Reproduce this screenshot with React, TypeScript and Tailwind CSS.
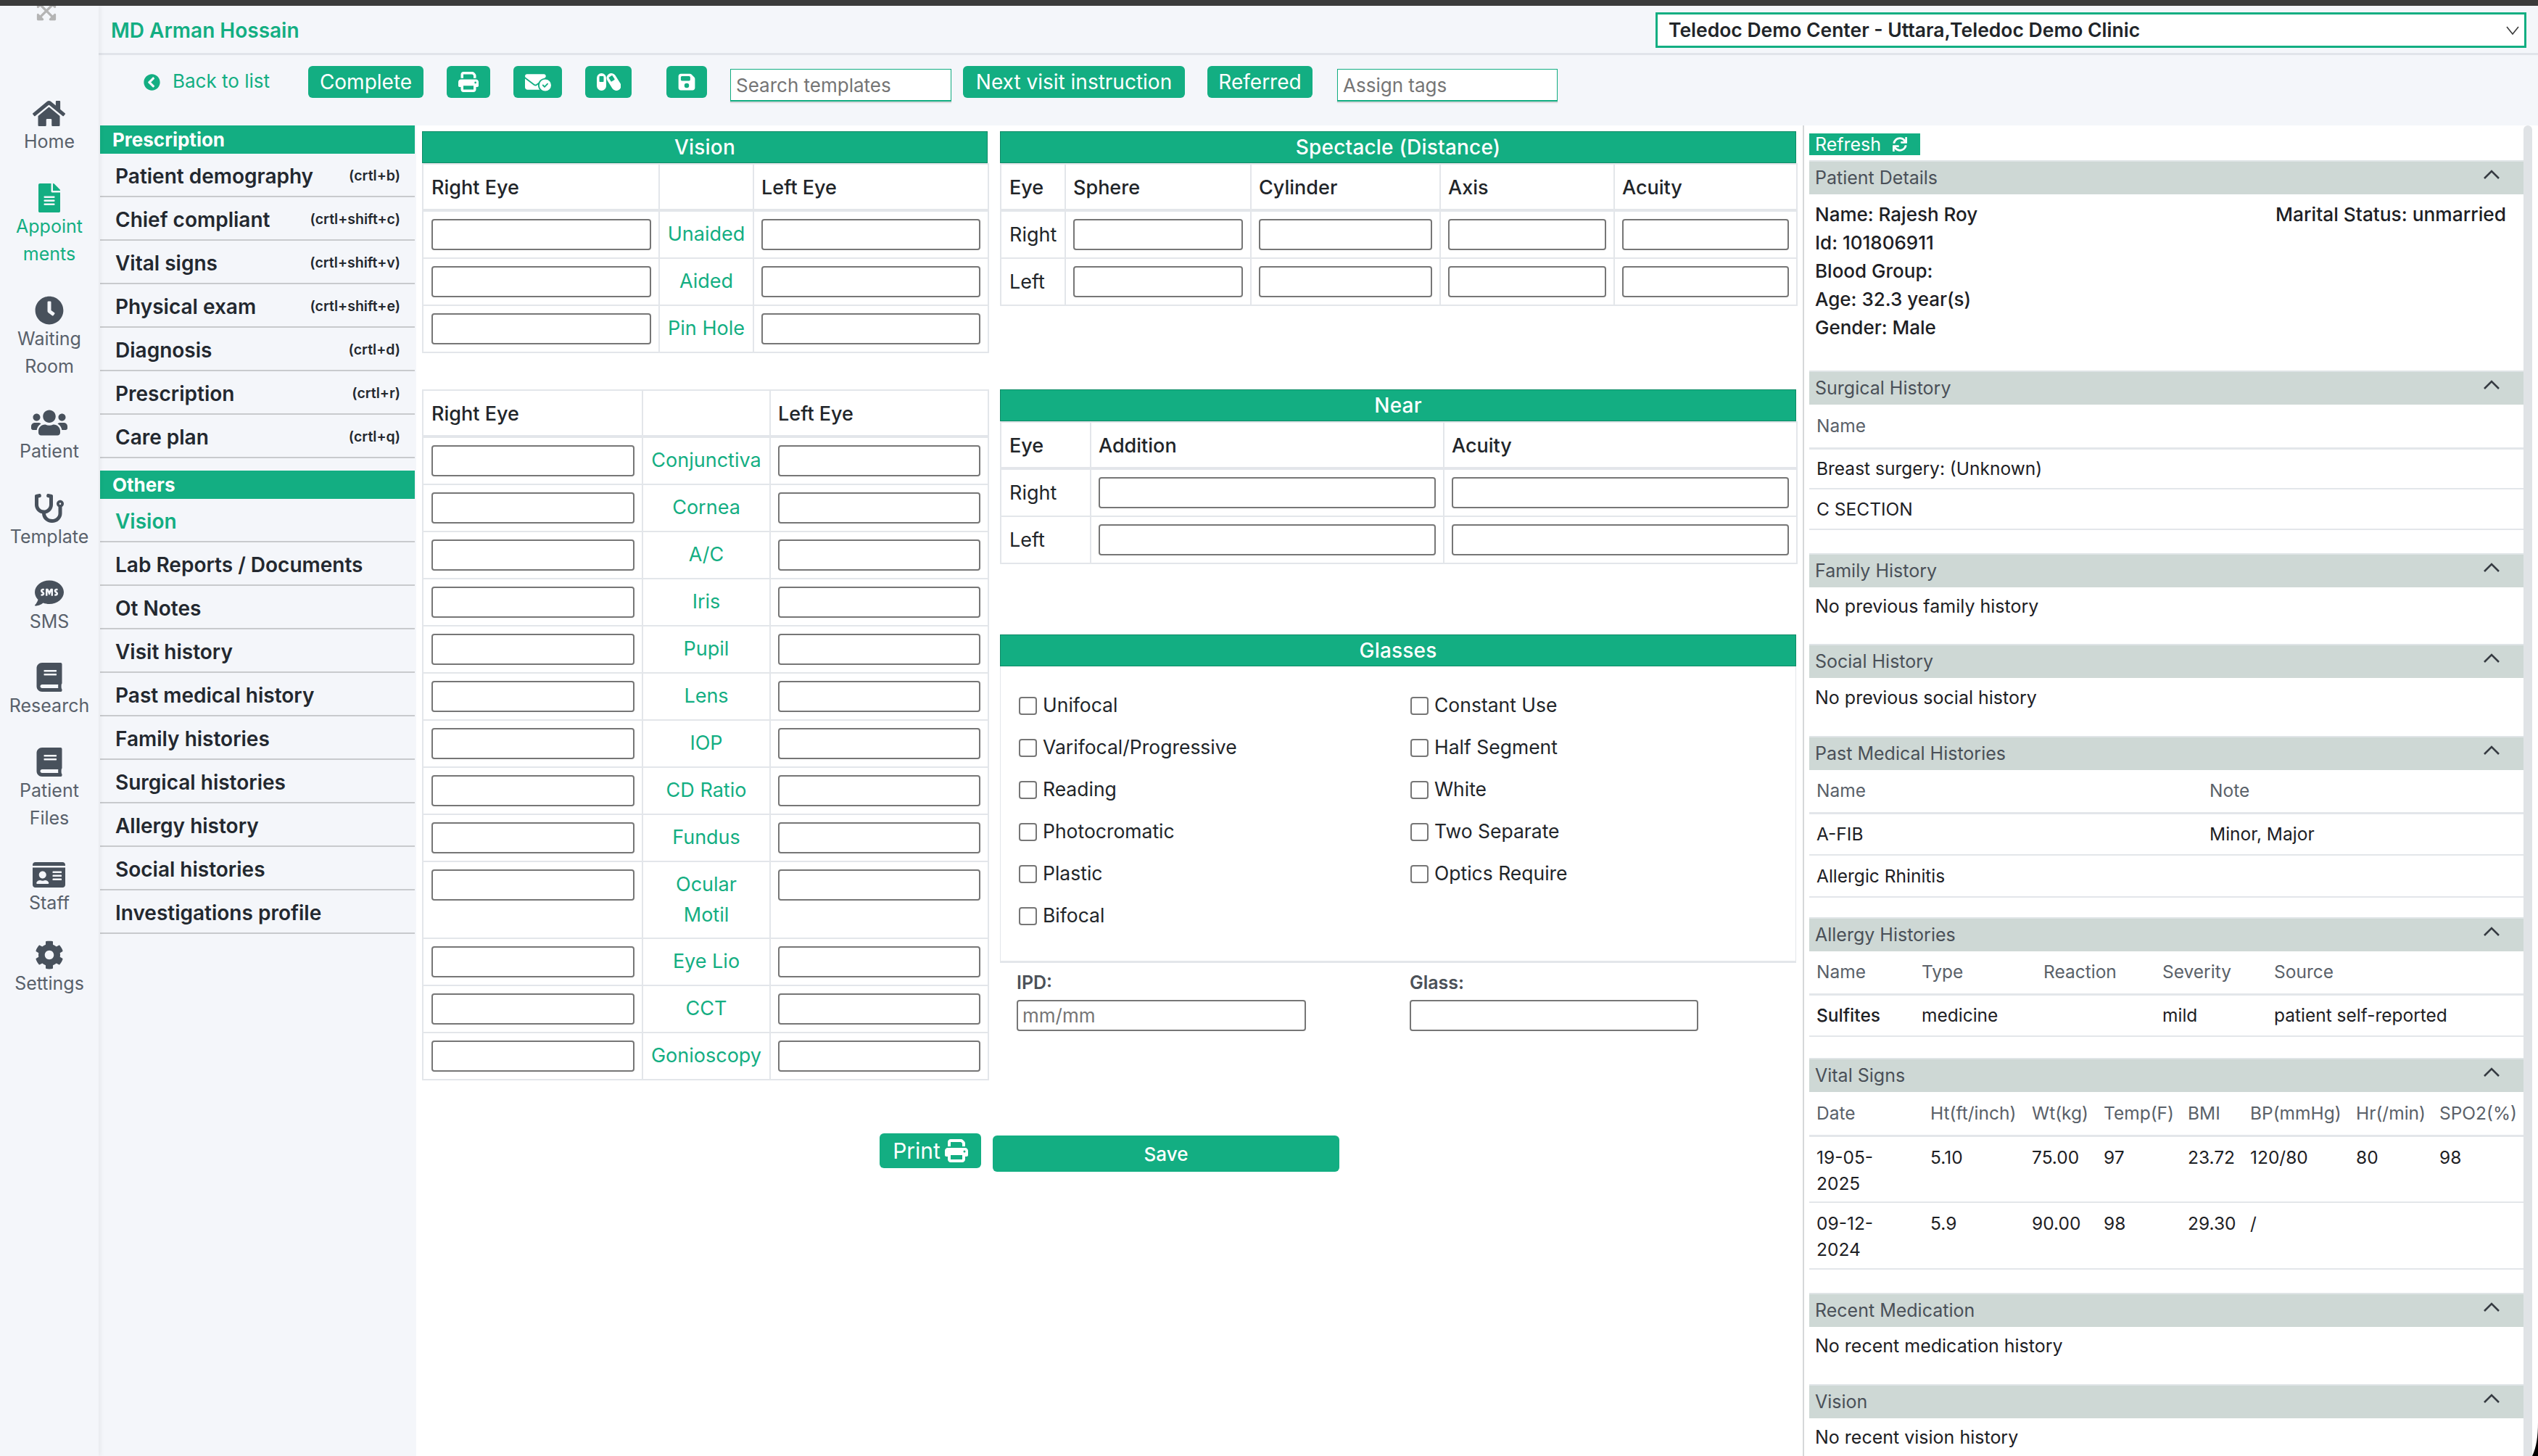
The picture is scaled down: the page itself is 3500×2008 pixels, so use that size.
import React from "react";
import { FaHome, FaFileAlt, FaClock, FaUsers, FaStethoscope, FaSms, FaBook, FaIdCard, FaCog, FaChevronCircleLeft, FaSync, FaExpandArrowsAlt } from "react-icons/fa";
import { FaEnvelopeCircleCheck, FaPrint, FaFloppyDisk } from "react-icons/fa6";

const side = [
  { icon: <FaHome size={45} />, label: ["Home"], m: "mt-[106px]" },
  { icon: <FaFileAlt size={40} />, label: ["Appoint", "ments"], m: "mt-[39px]", active: true },
  { icon: <FaClock size={40} />, label: ["Waiting", "Room"], m: "mt-[39px]" },
  { icon: <FaUsers size={50} />, label: ["Patient"], m: "mt-[39px]" },
  { icon: <FaStethoscope size={40} />, label: ["Template"], m: "mt-[40px]" },
  { icon: <FaSms size={40} />, label: ["SMS"], m: "mt-[39px]" },
  { icon: <FaBook size={40} />, label: ["Research"], m: "mt-[38px]" },
  { icon: <FaBook size={40} />, label: ["Patient", "Files"], m: "mt-[39px]" },
  { icon: <FaIdCard size={45} />, label: ["Staff"], m: "mt-[39px]" },
  { icon: <FaCog size={40} />, label: ["Settings"], m: "mt-[33px]" },
];

const prescription = [
  ["Patient demography", "(crtl+b)"],
  ["Chief compliant", "(crtl+shift+c)"],
  ["Vital signs", "(crtl+shift+v)"],
  ["Physical exam", "(crtl+shift+e)"],
  ["Diagnosis", "(crtl+d)"],
  ["Prescription", "(crtl+r)"],
  ["Care plan", "(crtl+q)"],
];
const others = ["Vision", "Lab Reports / Documents", "Ot Notes", "Visit history", "Past medical history", "Family histories", "Surgical histories", "Allergy history", "Social histories", "Investigations profile"];

function NavRow({ text, hint, active }: { text: string; hint?: string; active?: boolean }) {
  return (
    <div className="h-[60px] border-b-2 border-[#c8cacd] flex items-center justify-between pl-[21px] pr-[20px] pt-[3px]">
      <span className={`text-[28px] font-semibold ${active ? "text-[#13ae82]" : "text-[#23282f]"}`}>{text}</span>
      {hint && <span className="text-[19.500px] font-semibold text-[#23282f]">{hint}</span>}
    </div>
  );
}

function Field() {
  return <input className="block w-full h-[43px] bg-white border-2 border-[#767676] rounded-[4px]" />;
}

function GreenBar({ children }: { children: React.ReactNode }) {
  return <div className="h-[44px] bg-[#13ae82] border border-[#0e8a66] text-white text-[28px] font-medium tracking-[0.2px] flex items-center justify-center">{children}</div>;
}

function FormTable({ cols, head, rows }: { cols: number[]; head: string[]; rows: React.ReactNode[][] }) {
  return (
    <table className="table-fixed border-collapse w-full text-[27px] text-[#212529]">
      <colgroup>
        {cols.map((c, i) => <col key={i} style={{ width: c }} />)}
      </colgroup>
      <thead>
        <tr className="h-[64px]">
          {head.map((h, i) => (
            <th key={i} className="border-2 border-[#e3e6ea] border-b-4 pl-[10px] pr-[10px] first:pl-[11px] pt-[3px] text-left font-medium">{h}</th>
          ))}
        </tr>
      </thead>
      <tbody>
        {rows.map((r, i) => (
          <tr key={i} className="h-[65px]">
            {r.map((c, j) => (
              <td key={j} className="border-2 border-[#e3e6ea] pl-[10px] pr-[10px] first:pl-[11px] pt-[10px] pb-[10px] align-top leading-[43px]">{c}</td>
            ))}
          </tr>
        ))}
      </tbody>
    </table>
  );
}

const Mid = ({ children }: { children: React.ReactNode }) => <div className="text-center text-[#13ae82] leading-[42px]">{children}</div>;

function Check({ label }: { label: string }) {
  return (
    <label className="h-[58px] flex items-center gap-[8px] text-[26.500px] text-[#212529]">
      <input type="checkbox" className="appearance-none w-[25px] h-[25px] bg-white border-2 border-[#767676] rounded-[4px]" />
      {label}
    </label>
  );
}

function Chevron() {
  return (
    <svg width="22" height="13" viewBox="0 0 22 13" fill="none" stroke="#363b42" strokeWidth="2.600" className="-mt-[10px]">
      <polyline points="1,12 11,2 21,12" />
    </svg>
  );
}

function TwoCapsules() {
  return (
    <svg width="33" height="26" viewBox="0 0 33 26">
      <rect x="0" y="1" width="13" height="24" rx="6.500" fill="#fff" />
      <rect x="3.500" y="5" width="6" height="8" fill="#13ae82" rx="1" />
      <rect x="17" y="0" width="13" height="26" rx="6.500" fill="#fff" transform="rotate(-32 23.500 13)" />
      <rect x="20.500" y="4" width="6" height="7" fill="#13ae82" rx="1" transform="rotate(-32 23.500 13)" />
    </svg>
  );
}

function Section({ title, body, children }: { title: string; body: string; children: React.ReactNode }) {
  return (
    <div>
      <div className="h-[47px] bg-[#ced8d5] border-t-2 border-[#dfe4e6] pl-[8px] pr-[33px] flex items-center justify-between text-[25px] text-[#4a5058]">
        <span>{title}</span>
        <Chevron />
      </div>
      <div className={`${body} text-[25px] text-[#1d2024]`}>{children}</div>
    </div>
  );
}

function InfoTable({ cols, head, rows, headH, rowClass }: { cols: number[]; head: string[]; rows: React.ReactNode[][]; headH: string; rowClass: string }) {
  return (
    <table className="table-fixed border-collapse w-full text-[24.500px]">
      <colgroup>{cols.map((c, i) => <col key={i} style={{ width: c }} />)}</colgroup>
      <thead>
        <tr className={headH}>
          {head.map((h, i) => <th key={i} className="pl-[10px] pr-0 text-left font-normal text-[#5a6169] border-b-[3px] border-[#e3e6ea] whitespace-nowrap">{h}</th>)}
        </tr>
      </thead>
      <tbody>
        {rows.map((r, i) => (
          <tr key={i} className={rowClass}>
            {r.map((c, j) => <td key={j} className="pl-[10px] pr-0 py-0 border-b-2 border-[#e3e6ea] text-[#1d2024] align-middle">{c}</td>)}
          </tr>
        ))}
      </tbody>
    </table>
  );
}

const btn = "h-[44px] rounded-[6px] bg-[#13ae82] text-white flex items-center justify-center shrink-0";
const ipt = "h-[45px] mt-[4px] shrink-0 bg-white border border-[#13ae82] border-b-2 shadow-[0_2px_1px_rgba(0,0,0,0.12)] pl-[7px] text-[26px] placeholder:text-[#757575] outline-none";

export default function App() {
  const visionTop = ["Unaided", "Aided", "Pin Hole"];
  const visionMain: React.ReactNode[] = ["Conjunctiva", "Cornea", "A/C", "Iris", "Pupil", "Lens", "IOP", "CD Ratio", "Fundus", <>Ocular<br />Motil</>, "Eye Lio", "CCT", "Gonioscopy"];
  return (
    <div className="relative w-[3500px] h-[2008px] overflow-hidden flex flex-col bg-[#f4f6fa] font-[Inter,sans-serif]">
      <div className="h-[8px] bg-[#3b3b3b] shrink-0 relative z-20" />
      <div className="flex flex-1 min-h-0">
        <aside className="w-[136px] shrink-0 flex flex-col items-center relative z-10 shadow-[3px_0_6px_rgba(0,0,0,0.05)] bg-[#f4f6fa]">
          <div className="h-[22px] -ml-[8px] overflow-hidden flex items-end text-[#b4b4b4]">
            <FaExpandArrowsAlt size={30} className="shrink-0" />
          </div>
          {side.map((s) => (
            <div key={s.label.join("")} className={`${s.m} flex flex-col items-center ${s.active ? "text-[#13ae82]" : "text-[#48515c]"}`}>
              <div className="h-[40px] flex items-center justify-center">{s.icon}</div>
              {s.label.map((l) => <div key={l} className={`text-[25px] leading-[38px] ${s.active ? "text-[#13ae82]" : "text-[#59616b]"}`}>{l}</div>)}
            </div>
          ))}
        </aside>

        <div className="flex-1 min-w-0 flex flex-col">
          <header className="h-[68px] shrink-0 border-b-[3px] border-[#e1e4ea] flex items-center justify-between pl-[17px] pr-[16px] pt-[2px]">
            <span className="text-[28px] font-semibold text-[#13ae82]">MD Arman Hossain</span>
            <div className="relative w-[1201px] h-[49px] bg-white border-[3px] border-[#13ae82] flex items-center pl-[15px] text-[26.500px] font-semibold text-[#212529]">
              Teledoc Demo Center - Uttara,Teledoc Demo Clinic
              <svg width="18" height="12" viewBox="0 0 18 12" fill="none" stroke="#3a3a3a" strokeWidth="1.600" className="absolute right-[7px] top-[16px]"><polyline points="1,1 9,11 17,1" /></svg>
            </div>
          </header>

          <div className="h-[97px] shrink-0 flex items-start pt-[15px] pl-[62px]">
            <div className="w-[227px] h-[44px] shrink-0 flex items-center gap-[17px] text-[26px] text-[#13ae82]">
              <FaChevronCircleLeft size={23} />
              <span className="-mt-[4px]">Back to list</span>
            </div>
            <button className={`${btn} w-[159px] text-[28px]`}>Complete</button>
            <button className={`${btn} w-[60px] ml-[32px]`}><FaPrint size={28} /></button>
            <button className={`${btn} w-[67px] ml-[32px]`}><FaEnvelopeCircleCheck size={36} /></button>
            <button className={`${btn} w-[64px] ml-[32px]`}><TwoCapsules /></button>
            <button className={`${btn} w-[56px] ml-[48px] bg-[#1aa3bc]`}><FaFloppyDisk size={26} /></button>
            <input className={`${ipt} w-[305px] ml-[32px]`} placeholder="Search templates" />
            <button className={`${btn} w-[306px] ml-[16px] text-[28px]`}>Next visit instruction</button>
            <button className={`${btn} w-[145px] ml-[31px] text-[28px]`}>Referred</button>
            <input className={`${ipt} w-[304px] ml-[34px]`} placeholder="Assign tags" />
          </div>

          <div className="flex-1 min-h-0 flex">
            <nav className="w-[436px] shrink-0 pl-[2px]">
              <div className="h-[39px] bg-[#13ae82] text-white text-[26px] font-bold flex items-center pl-[17px]">Prescription</div>
              {prescription.map(([t, h]) => <NavRow key={t} text={t} hint={h} />)}
              <div className="h-[39px] mt-[17px] bg-[#13ae82] text-white text-[26px] font-bold flex items-center pl-[17px]">Others</div>
              {others.map((t, i) => <NavRow key={t} text={t} active={i === 0} />)}
            </nav>

            <main className="flex-1 min-w-0 bg-white flex ml-[2px]">
              <div className="w-[1910px] shrink-0 pl-[8px] pt-[8px]">
                <div className="flex gap-[17px]">
                  <div className="w-[780px] shrink-0">
                    <GreenBar>Vision</GreenBar>
                    <FormTable
                      cols={[326, 130, 324]}
                      head={["Right Eye", "", "Left Eye"]}
                      rows={visionTop.map((l) => [<Field />, <Mid>{l}</Mid>, <Field />])}
                    />
                    <div className="h-[50px]" />
                    <FormTable
                      cols={[303, 176, 301]}
                      head={["Right Eye", "", "Left Eye"]}
                      rows={visionMain.map((l) => [<Field />, <Mid>{l}</Mid>, <Field />])}
                    />
                  </div>
                  <div className="w-[1098px] shrink-0">
                    <GreenBar>Spectacle (Distance)</GreenBar>
                    <FormTable
                      cols={[89, 256, 261, 240, 252]}
                      head={["Eye", "Sphere", "Cylinder", "Axis", "Acuity"]}
                      rows={["Right", "Left"].map((e) => [e, <Field />, <Field />, <Field />, <Field />])}
                    />
                    <div className="h-[115px]" />
                    <GreenBar>Near</GreenBar>
                    <FormTable
                      cols={[124, 487, 487]}
                      head={["Eye", "Addition", "Acuity"]}
                      rows={["Right", "Left"].map((e) => [e, <Field />, <Field />])}
                    />
                    <div className="h-[97px]" />
                    <GreenBar>Glasses</GreenBar>
                    <div className="border-l border-r border-b-[3px] border-[#e3e6ea] pt-[25px] pb-[33px] pl-[25px] grid grid-cols-[540px_1fr]">
                      <div>
                        {["Unifocal", "Varifocal/Progressive", "Reading", "Photocromatic", "Plastic", "Bifocal"].map((l) => <Check key={l} label={l} />)}
                      </div>
                      <div>
                        {["Constant Use", "Half Segment", "White", "Two Separate", "Optics Require"].map((l) => <Check key={l} label={l} />)}
                      </div>
                    </div>
                    <div className="flex pl-[23px] pt-[10px]">
                      <div className="w-[542px]">
                        <div className="h-[36px] text-[25px] font-semibold text-[#4b5158] mb-[5px] flex items-center">IPD:</div>
                        <input placeholder="mm/mm" className="block w-[399px] h-[43px] bg-white border-2 border-[#767676] rounded-[4px] pl-[6px] text-[26px] placeholder:text-[#757575]" />
                      </div>
                      <div>
                        <div className="h-[36px] text-[25px] font-semibold text-[#4b5158] mb-[5px] flex items-center">Glass:</div>
                        <input className="block w-[398px] h-[43px] bg-white border-2 border-[#767676] rounded-[4px]" />
                      </div>
                    </div>
                  </div>
                </div>
                <div className="flex items-start gap-[16px] pl-[631px] mt-[73px]">
                  <button className="w-[140px] h-[48px] rounded-[6px] bg-[#13ae82] text-white text-[30px] flex items-center justify-center gap-[6px]">Print <FaPrint size={32} /></button>
                  <button className="w-[478px] h-[50px] mt-[3px] rounded-[6px] bg-[#13ae82] text-white text-[26px] font-medium flex items-center justify-center">Save</button>
                </div>
              </div>

              <aside className="w-[994px] shrink-0 ml-[2px] border-l-2 border-[#d6d8da] pl-[7px] pt-[11px] overflow-hidden">
                <div className="w-[153px] h-[30px] bg-[#13ae82] text-white text-[25px] flex items-center pl-[8px] gap-[16px] leading-none">Refresh <FaSync size={20} /></div>
                <div className="h-[7px]" />
                <Section title="Patient Details" body="h-[243px] relative pl-[8px] pt-[8px]">
                  <div className="text-[26px] font-medium leading-[39px] text-[#1d2024]">
                    <div>Name: Rajesh Roy</div>
                    <div>Id: 101806911</div>
                    <div>Blood Group:</div>
                    <div>Age: 32.3 year(s)</div>
                    <div>Gender: Male</div>
                  </div>
                  <div className="absolute top-[8px] right-[24px] text-[26.300px] font-medium leading-[39px]">Marital Status: unmarried</div>
                </Section>
                <Section title="Surgical History" body="h-[205px]">
                  <InfoTable cols={[985]} head={["Name"]} headH="h-[60px]" rowClass="h-[56px]" rows={[["Breast surgery: (Unknown)"], ["C SECTION"]]} />
                </Section>
                <Section title="Family History" body="h-[78px] pl-[8px] pt-[7px] leading-[39px]">No previous family history</Section>
                <Section title="Social History" body="h-[80px] pl-[8px] pt-[8px] leading-[39px]">No previous social history</Section>
                <Section title="Past Medical Histories" body="h-[203px]">
                  <InfoTable cols={[542, 443]} head={["Name", "Note"]} headH="h-[59px]" rowClass="h-[58px]" rows={[["A-FIB", "Minor, Major"], ["Allergic Rhinitis", ""]]} />
                </Section>
                <Section title="Allergy Histories" body="h-[147px]">
                  <InfoTable cols={[145, 168, 164, 154, 354]} head={["Name", "Type", "Reaction", "Severity", "Source"]} headH="h-[59px]" rowClass="h-[58px]" rows={[[<span className="font-medium">Sulfites</span>, "medicine", "", "mild", "patient self-reported"]]} />
                </Section>
                <Section title="Vital Signs" body="h-[277px]">
                  <InfoTable
                    cols={[157, 140, 99, 116, 86, 146, 115, 126]}
                    head={["Date", "Ht(ft/inch)", "Wt(kg)", "Temp(F)", "BMI", "BP(mmHg)", "Hr(/min)", "SPO2(%)"]}
                    headH="h-[60px]"
                    rowClass="h-[92px] [&>td]:align-top [&>td]:pt-[10px] [&>td]:leading-[36px]"
                    rows={[
                      [<>19-05-<br />2025</>, "5.10", "75.00", "97", "23.72", "120/80", "80", "98"],
                      [<>09-12-<br />2024</>, "5.9", "90.00", "98", "29.30", "/", "", ""],
                    ]}
                  />
                </Section>
                <Section title="Recent Medication" body="h-[79px] pl-[8px] pt-[7px] leading-[39px]">No recent medication history</Section>
                <Section title="Vision" body="h-[80px] pl-[8px] pt-[7px] leading-[39px]">No recent vision history</Section>
              </aside>
              <div className="w-[20px] shrink-0 bg-white">
                <div className="w-[12px] h-full rounded-t-full bg-[#e0e3e6]" />
              </div>
            </main>
          </div>
        </div>
      </div>
      <svg width="8" height="46" viewBox="0 0 8 46" className="absolute right-0 bottom-0"><path d="M8 0C8 18 6 34 0 46h8z" fill="#000" /></svg>
    </div>
  );
}
